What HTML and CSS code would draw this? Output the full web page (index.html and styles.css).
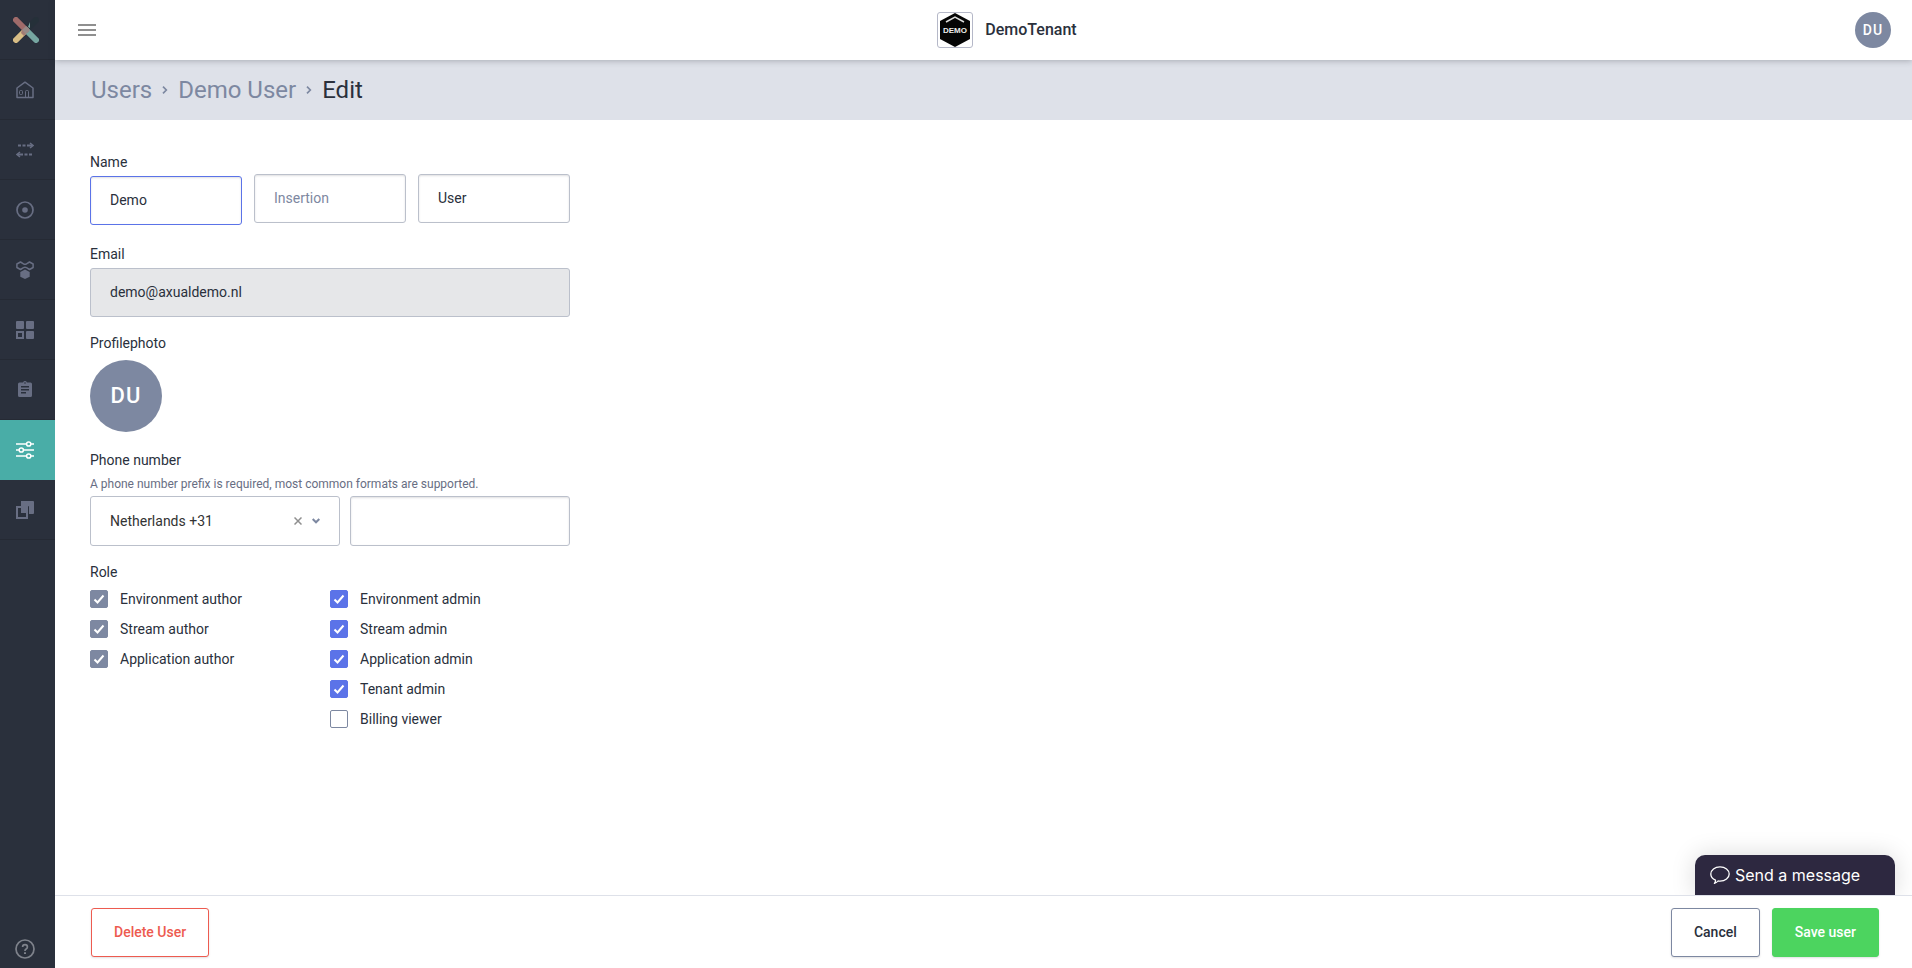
FILE: index.html
```html
<!DOCTYPE html>
<html lang="en">
<head>
    <meta charset="UTF-8">
    <meta name="viewport" content="width=device-width, initial-scale=1.0">
    <title>Edit user</title>
    <link rel="stylesheet" href="styles.css">
</head>
<body>

<nav class="sidebar" aria-label="Main">
    <a href="#" class="side-logo" aria-label="Start">
        <svg width="26" height="26" viewBox="0 0 26 26" fill="none" stroke-width="6" stroke-linecap="round">
            <path d="M13 13L23 3" stroke="#253039"/>
            <path d="M3 23L13 13" stroke="#d8bd85"/>
            <path d="M13 13L23 23" stroke="#76a6a1"/>
            <path d="M3 3L13 13" stroke="#a06b6a"/>
            <path d="M13 9l4 4-4 4-4-4z" fill="#978987"/>
            <path d="M15 10l2-5v6z" fill="#76a6a1"/>
            <path d="M8 16l3 3 2-2-4-4z" fill="#a27b73"/>
        </svg>
    </a>
    <a href="#" class="side-item" aria-label="Home">
        <svg width="18" height="18" viewBox="0 0 18 18" fill="none" stroke="currentColor">
            <path d="M1 16.500V7l8-5.800L17 7v9.500z" stroke-width="1.500" stroke-linejoin="round"/>
            <rect x="3.500" y="9.500" width="3" height="4" rx="1"/>
            <path d="M9.500 16v-5.500q0-1 1-1h1q1 0 1 1V16"/>
        </svg>
    </a>
    <a href="#" class="side-item" aria-label="Streams">
        <svg width="18" height="18" viewBox="0 0 18 18" fill="none" stroke="currentColor" stroke-width="2">
            <path d="M2 4.500h3M6.500 4.500h3M11 4.500h5M16 13.500h-3M11.500 13.500h-3M7 13.500H2"/>
            <path d="M14 2l3 2.500L14 7M4 11l-3 2.500L4 16" stroke-width="1.500"/>
        </svg>
    </a>
    <a href="#" class="side-item" aria-label="Topics">
        <svg width="18" height="18" viewBox="0 0 18 18" fill="none" stroke="currentColor" stroke-width="1.700">
            <circle cx="9" cy="9" r="8"/>
            <circle cx="9" cy="9" r="2.800" fill="currentColor" stroke="none"/>
        </svg>
    </a>
    <a href="#" class="side-item" aria-label="Groups">
        <svg width="18" height="18" viewBox="0 0 18 18" fill="none" stroke="currentColor" stroke-width="1.500">
            <path d="M4.500 1L7.500 2.800q1.500 1 3 0L13.500 1l3.600 2v3.500l-3.600 2-3-1.800q-1.500-1-3 0l-3 1.800-3.600-2V3z" stroke-linejoin="round"/>
            <path d="M9 8.500l4.700 2.500v4.800L9 18l-4.700-2.200V11z" fill="currentColor" stroke="none"/>
        </svg>
    </a>
    <a href="#" class="side-item" aria-label="Applications">
        <svg width="18" height="18" viewBox="0 0 18 18" fill="currentColor">
            <rect x="0" y="0" width="8" height="8" rx="1"/>
            <rect x="10" y="0" width="8" height="8" rx="1"/>
            <rect x="10" y="10" width="8" height="8" rx="1"/>
            <rect x="1" y="11" width="6" height="6" fill="none" stroke="currentColor" stroke-width="2"/>
        </svg>
    </a>
    <a href="#" class="side-item" aria-label="Reports">
        <svg width="18" height="18" viewBox="0 0 18 18">
            <path d="M3.500 1.500h3.600a2 2 0 0 1 3.800 0h3.600q1.500 0 1.500 1.500v11.500q0 1.500-1.500 1.500h-11Q2 16 2 14.500V3q0-1.500 1.500-1.500z" fill="currentColor"/>
            <path d="M5 5.700h8M5 8.700h8M5 11.700h5" stroke="#2a303c" stroke-width="1.500"/>
            <circle cx="9" cy="2" r="0.800" fill="#2a303c"/>
        </svg>
    </a>
    <a href="#" class="side-item active" aria-label="Settings">
        <svg width="18" height="18" viewBox="0 0 18 18" fill="none" stroke="currentColor" stroke-width="1.500">
            <path d="M0 3h10.500M15 3h3M0 9h3M7.500 9H18M0 15h10.500M15 15h3"/>
            <circle cx="12.700" cy="3" r="2.100"/>
            <circle cx="5.300" cy="9" r="2.100"/>
            <circle cx="12.700" cy="15" r="2.100"/>
        </svg>
    </a>
    <a href="#" class="side-item" aria-label="Instances">
        <svg width="18" height="18" viewBox="0 0 18 18">
            <path d="M5 0h12q1 0 1 1v11q0 1-1 1H5z" fill="currentColor"/>
            <rect x="0" y="5" width="13" height="13" rx="1" fill="#2a303c"/>
            <rect x="1" y="6" width="10" height="11" fill="none" stroke="currentColor" stroke-width="2"/>
            <rect x="5" y="7" width="5" height="5" fill="currentColor"/>
        </svg>
    </a>
    <a href="#" class="side-help" aria-label="Help">
        <svg width="20" height="20" viewBox="0 0 20 20" fill="none" stroke="currentColor" stroke-width="1.700">
            <circle cx="10" cy="10" r="9"/>
            <path d="M7.600 8q0-2.400 2.400-2.400T12.400 8q0 1.300-1.200 2T10 11.800v.2"/>
            <path d="M10 13.200v1.800" stroke-width="2"/>
        </svg>
    </a>
</nav>

<div class="page">
    <header class="topbar">
        <button type="button" class="menu-button" aria-label="Toggle menu">
            <svg width="18" height="12" viewBox="0 0 18 12"><path d="M0 1h18M0 6h18M0 11h18" stroke="#8f8f8f" stroke-width="2"/></svg>
        </button>
        <div class="tenant">
            <div class="tenant-logo">
                <svg width="34" height="34" viewBox="0 0 34 34">
                    <path d="M17 0l15 8v18l-15 8-15-8V8z" fill="#050505"/>
                    <path d="M8 9l9-5 9 5" fill="none" stroke="#ddd" stroke-width="1.500"/>
                    <text x="17" y="20" text-anchor="middle" class="tenant-mark">DEMO</text>
                </svg>
            </div>
            <span>DemoTenant</span>
        </div>
        <a href="#" class="avatar avatar-small">DU</a>
    </header>

    <div class="breadcrumb">
        <a href="#">Users</a>
        <svg width="6" height="8" viewBox="0 0 6 8"><path d="M1 0.700L4.300 4 1 7.300" fill="none" stroke="#7d88a1" stroke-width="1.700"/></svg>
        <a href="#">Demo User</a>
        <svg width="6" height="8" viewBox="0 0 6 8"><path d="M1 0.700L4.300 4 1 7.300" fill="none" stroke="#7d88a1" stroke-width="1.700"/></svg>
        <span>Edit</span>
    </div>

    <main class="content">
        <form class="user-form" id="user-form">
            <div class="name-row">
                <div>
                    <label class="label" for="first-name">Name</label>
                    <input type="text" class="input focused" id="first-name" value="Demo">
                </div>
                <div class="name-extra">
                    <input type="text" class="input" aria-label="Insertion" placeholder="Insertion">
                </div>
                <div class="name-extra">
                    <input type="text" class="input" aria-label="Last name" value="User">
                </div>
            </div>

            <div class="field">
                <label class="label" for="email">Email</label>
                <input type="email" class="input" id="email" value="demo@axualdemo.nl" disabled>
            </div>

            <div class="photo">
                <div class="label">Profilephoto</div>
                <div class="avatar avatar-large">DU</div>
            </div>

            <div class="field">
                <label class="label" for="phone">Phone number</label>
                <p class="hint">A phone number prefix is required, most common formats are supported.</p>
                <div class="phone-row">
                    <div class="select">
                        <select aria-label="Country prefix">
                            <option>Netherlands +31</option>
                        </select>
                        <button type="button" class="clear" aria-label="Clear">
                            <svg width="8" height="8" viewBox="0 0 8 8"><path d="M0.500 0.500l7 7M7.500 0.500l-7 7" stroke="#8f8f8f" stroke-width="1.500"/></svg>
                        </button>
                        <svg width="8" height="6" viewBox="0 0 8 6"><path d="M0.700 1L4 4.300 7.300 1" fill="none" stroke="#7d88a1" stroke-width="2"/></svg>
                    </div>
                    <input type="tel" class="input" id="phone">
                </div>
            </div>

            <fieldset class="roles">
                <legend class="label">Role</legend>
                <div class="role-columns">
                    <div class="role-list">
                        <label><input type="checkbox" checked disabled>Environment author</label>
                        <label><input type="checkbox" checked disabled>Stream author</label>
                        <label><input type="checkbox" checked disabled>Application author</label>
                    </div>
                    <div class="role-list">
                        <label><input type="checkbox" checked>Environment admin</label>
                        <label><input type="checkbox" checked>Stream admin</label>
                        <label><input type="checkbox" checked>Application admin</label>
                        <label><input type="checkbox" checked>Tenant admin</label>
                        <label><input type="checkbox">Billing viewer</label>
                    </div>
                </div>
            </fieldset>
        </form>
    </main>

    <footer class="actions">
        <button type="button" class="button delete">Delete User</button>
        <button type="button" class="button cancel">Cancel</button>
        <button type="submit" class="button save" form="user-form">Save user</button>
        <button type="button" class="chat">
            <svg width="20" height="18" viewBox="0 0 20 18" fill="none" stroke="#fff" stroke-width="1.300" stroke-linejoin="round">
                <path d="M5.500 14.200C2.600 13 .8 10.700 .8 8 .8 4 4.800 .8 10 .8s9.200 3.200 9.200 7.200-4 7.200-9.200 7.200q-1 0-2-.2-1.200 1.700-3.600 2.300 1.200-1.500 1.100-3.100z"/>
            </svg>
            Send a message
        </button>
    </footer>
</div>

</body>
</html>
```
FILE: styles.css
```css
* {
    box-sizing: border-box;
}

body {
    margin: 0;
    display: flex;
    min-height: 100vh;
    background-color: #fff;
    color: #2a303c;
    font-family: Roboto, Arial, sans-serif;
    font-size: 14px;
    line-height: 20px;
}

a {
    text-decoration: none;
}

button, input, select {
    font: inherit;
    color: inherit;
}

button {
    cursor: pointer;
}

/* Sidebar */
.sidebar {
    display: flex;
    flex-direction: column;
    flex: none;
    width: 55px;
    background-color: #2a303c;
}

.side-logo,
.side-item {
    display: flex;
    align-items: center;
    height: 60px;
    border-bottom: 1px solid #252a34;
}

.side-logo {
    padding-left: 13px;
}

.side-item {
    padding-left: 16px;
    color: #686e83;
}

.side-item.active {
    background-color: #49ada7;
    border-color: #49ada7;
    color: #fff;
}

.side-help {
    display: flex;
    margin-top: auto;
    padding: 0 0 9px 15px;
    color: #7e828b;
}

/* Header */
.page {
    display: flex;
    flex-direction: column;
    flex: 1;
}

.topbar {
    display: grid;
    grid-template-columns: 47px 1fr;
    align-items: center;
    height: 60px;
    background-color: #fff;
    box-shadow: 0 1px 6px rgba(44, 49, 61, 0.3);
    z-index: 1;
}

.menu-button {
    display: flex;
    padding: 12px 6px 12px 23px;
    border: none;
    background: none;
}

.tenant {
    grid-area: 1 / 2;
    display: flex;
    justify-content: center;
    align-items: center;
    gap: 12px;
    font-size: 16px;
    font-weight: 500;
}

.tenant-logo {
    display: flex;
    border: 1px solid #b5b8c8;
    border-radius: 3px;
}

.tenant-mark {
    fill: #eee;
    font-family: "Liberation Sans", Arial, sans-serif;
    font-size: 8px;
    font-weight: 700;
}

.avatar {
    display: flex;
    justify-content: center;
    align-items: center;
    border-radius: 50%;
    background-color: #7d88a1;
    color: #fff;
    font-weight: 500;
    letter-spacing: 1px;
}

.avatar-small {
    grid-area: 1 / 2;
    justify-self: end;
    width: 36px;
    height: 36px;
    margin-right: 21px;
}

.avatar-large {
    width: 72px;
    height: 72px;
    font-size: 22px;
}

.breadcrumb {
    display: flex;
    align-items: center;
    gap: 10px;
    height: 60px;
    padding: 0 36px;
    background-color: #dee1e9;
    font-size: 24px;
}

.breadcrumb a {
    color: #7d88a1;
}

/* Form */
.content {
    flex: 1;
    padding: 32px 35px;
}

.user-form {
    max-width: 480px;
}

.label {
    display: block;
    margin-bottom: 4px;
    padding: 0;
}

.field {
    margin-bottom: 16px;
}

.name-row {
    display: grid;
    grid-template-columns: repeat(3, 1fr);
    align-items: end;
    gap: 12px;
    margin-bottom: 19px;
}

.name-extra {
    padding-bottom: 2px;
}

.input {
    display: block;
    width: 100%;
    height: 49px;
    padding: 0 19px 2px;
    border: 1px solid #bbc0cb;
    border-radius: 3px;
    background-color: #fff;
    box-shadow: inset 0 1px 2px rgba(44, 49, 61, 0.15);
}

.input::placeholder {
    color: #7d88a1;
}

.input.focused {
    border-color: #5b73e8;
}

.input:disabled {
    background-color: #e6e7e9;
    box-shadow: none;
}

.photo {
    margin-bottom: 18px;
}

.photo .label {
    margin-bottom: 7px;
}

.hint {
    margin: 0 0 2px;
    color: #686e83;
    font-size: 12px;
}

.phone-row {
    display: grid;
    grid-template-columns: 250px 1fr;
    gap: 10px;
}

.phone-row .input {
    height: 50px;
}

.select {
    display: flex;
    align-items: center;
    height: 50px;
    padding-right: 19px;
    border: 1px solid #bbc0cb;
    border-radius: 3px;
}

.select select {
    flex: 1;
    height: 48px;
    padding: 0 19px;
    border: none;
    background: none;
    appearance: none;
    color: #333;
}

.clear {
    display: flex;
    padding: 5px;
    margin-right: 5px;
    border: none;
    background: none;
}

.roles {
    margin: 0;
    padding: 0;
    border: none;
}

.roles .label {
    margin-bottom: 8px;
}

.role-columns {
    display: grid;
    grid-template-columns: 1fr 1fr;
}

.role-list {
    display: flex;
    flex-direction: column;
    align-items: flex-start;
    gap: 12px;
}

.role-list label {
    display: flex;
    align-items: center;
    gap: 12px;
    line-height: 18px;
}

.role-list input {
    width: 18px;
    height: 18px;
    margin: 0;
    border: 1px solid #7d88a1;
    border-radius: 2px;
    background-color: #fff;
    appearance: none;
}

.role-list input:checked {
    border-color: #5b73e8;
    background: #5b73e8 url("data:image/svg+xml,%3Csvg xmlns='http://www.w3.org/2000/svg' viewBox='0 0 16 16'%3E%3Cpath d='M3.500 8.500l3 3 6-7' fill='none' stroke='white' stroke-width='2'/%3E%3C/svg%3E") center / 16px no-repeat;
}

.role-list input:disabled {
    border-color: #7d88a1;
    background-color: #7d88a1;
}

/* Footer */
.actions {
    position: relative;
    display: flex;
    align-items: flex-start;
    gap: 12px;
    height: 73px;
    padding: 12px 33px 0 36px;
    border-top: 1px solid #dee1e9;
}

.button {
    height: 49px;
    padding: 0 22px 2px;
    border: 1px solid;
    border-radius: 3px;
    background-color: #fff;
    box-shadow: 0 1px 2px rgba(44, 49, 61, 0.15);
    font-weight: 500;
}

.button.delete {
    margin-right: auto;
    border-color: #ed5b50;
    color: #ed5b50;
}

.button.cancel {
    border-color: #7d88a1;
}

.button.save {
    border-color: #4cd45f;
    background-color: #4cd45f;
    color: #fff;
}

.chat {
    position: absolute;
    right: 17px;
    bottom: 100%;
    display: flex;
    align-items: center;
    gap: 5px;
    width: 200px;
    height: 40px;
    margin-bottom: 1px;
    padding: 0 15px;
    border: none;
    border-radius: 10px 10px 0 0;
    background-color: #2d2840;
    box-shadow: 0 0 24px rgba(0, 0, 0, 0.15);
    clip-path: inset(-40px -40px 0 -40px);
    color: #fff;
    font-family: Inter, Roboto, sans-serif;
    font-size: 16px;
}
```
